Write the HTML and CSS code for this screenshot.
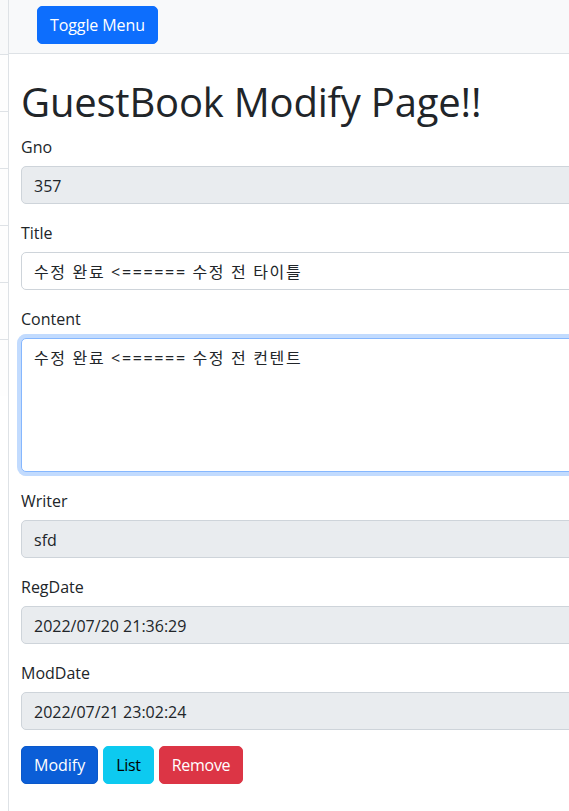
FILE: index.html
```html
<!DOCTYPE html>
<html lang="ko">
<head>
<meta charset="utf-8">
<title>GuestBook Modify Page</title>
<link rel="stylesheet" href="styles.css">
</head>
<body>
<div class="wrapper">
  <div class="sidebar">
    <div class="sidebar-heading"></div>
    <div class="list-group">
      <div class="list-item"></div>
      <div class="list-item"></div>
      <div class="list-item"></div>
      <div class="list-item"></div>
      <div class="list-item"></div>
      <div class="list-item"></div>
    </div>
  </div>
  <div class="page">
    <nav class="navbar">
      <button class="btn btn-primary toggle" type="button">Toggle Menu</button>
    </nav>
    <div class="container">
      <h1 class="title">GuestBook Modify Page!!</h1>
      <form class="form">
        <div class="group">
          <label class="label">Gno</label>
          <input class="control readonly" type="text" value="357" readonly>
        </div>
        <div class="group">
          <label class="label">Title</label>
          <input class="control kr" type="text" value="수정 완료 &lt;====== 수정 전 타이틀">
        </div>
        <div class="group">
          <label class="label">Content</label>
          <textarea class="control area kr focused" rows="5">수정 완료 &lt;====== 수정 전 컨텐트</textarea>
        </div>
        <div class="group">
          <label class="label">Writer</label>
          <input class="control readonly" type="text" value="sfd" readonly>
        </div>
        <div class="group">
          <label class="label">RegDate</label>
          <input class="control readonly" type="text" value="2022/07/20 21:36:29" readonly>
        </div>
        <div class="group">
          <label class="label">ModDate</label>
          <input class="control readonly" type="text" value="2022/07/21 23:02:24" readonly>
        </div>
        <div class="actions">
          <button type="button" class="btn btn-modify">Modify</button>
          <button type="button" class="btn btn-info">List</button>
          <button type="button" class="btn btn-danger">Remove</button>
        </div>
      </form>
    </div>
  </div>
</div>
</body>
</html>
```
FILE: styles.css
```css
html, body {
  margin: 0;
  padding: 0;
  overflow: hidden;
}
body {
  font-family: "Open Sans", "Noto Sans CJK KR", sans-serif;
  font-size: 16px;
  line-height: 1.5;
  color: #212529;
  background: #fff;
}
.wrapper {
  display: flex;
  width: 569px;
  min-height: 811px;
  overflow: hidden;
}
.sidebar {
  flex: 0 0 8px;
  width: 8px;
  border-right: 1px solid #dee2e6;
  background: #fff;
  overflow: hidden;
}
.sidebar-heading {
  height: 54px;
  background: #f8f9fa;
  border-bottom: 1px solid #dee2e6;
}
.list-item {
  height: 56px;
  background: #fefefe;
  border-bottom: 1px solid #dee2e6;
}
.list-item:last-child {
  border-bottom: 0;
}
.page {
  flex: 0 0 620px;
  width: 620px;
}
.navbar {
  box-sizing: border-box;
  height: 54px;
  background: #f8f9fa;
  border-bottom: 1px solid #dee2e6;
  padding: 6px 12px 0;
}
.btn {
  display: inline-block;
  font-family: inherit;
  font-size: 16px;
  line-height: 24px;
  padding: 6px 12px;
  border: 1px solid transparent;
  border-radius: 5px;
  cursor: pointer;
  margin: 0;
  vertical-align: middle;
}
.btn-primary {
  background: #0d6efd;
  border-color: #0d6efd;
  color: #fff;
  letter-spacing: -0.1px;
}
.toggle {
  margin-left: 16px;
}
.container {
  padding: 0 12px;
  margin-top: 24px;
}
.title {
  font-size: 40px;
  font-weight: 400;
  line-height: 1.2;
  letter-spacing: -0.2px;
  margin: 0 0 8px;
}
.form {
  margin: 0;
}
.group {
  margin-bottom: 16px;
}
.label {
  display: block;
  margin-bottom: 8px;
  line-height: 24px;
  padding-top: 1px;
  height: 23px;
}
.control {
  display: block;
  width: 100%;
  box-sizing: border-box;
  font-family: inherit;
  font-size: 16px;
  line-height: 24px;
  padding: 7px 12px 5px;
  color: #212529;
  background: #fff;
  border: 1px solid #ced4da;
  border-radius: 5px;
  margin: 0;
  outline: none;
}
.readonly {
  background: #e9ecef;
}
.kr {
  letter-spacing: 1.65px;
}
.area {
  height: 134px;
  resize: vertical;
}
.focused {
  border-color: #86b7fe;
  box-shadow: 0 0 0 4px rgba(13, 110, 253, 0.25);
}
.actions {
  display: flex;
  gap: 5px;
}
.btn-modify {
  background: #0b5ed7;
  border-color: #0a58ca;
  color: #fff;
}
.btn-info {
  background: #0dcaf0;
  border-color: #0dcaf0;
  color: #000;
  letter-spacing: -0.3px;
}
.btn-danger {
  background: #dc3545;
  border-color: #dc3545;
  color: #fff;
  letter-spacing: -0.3px;
}
```
